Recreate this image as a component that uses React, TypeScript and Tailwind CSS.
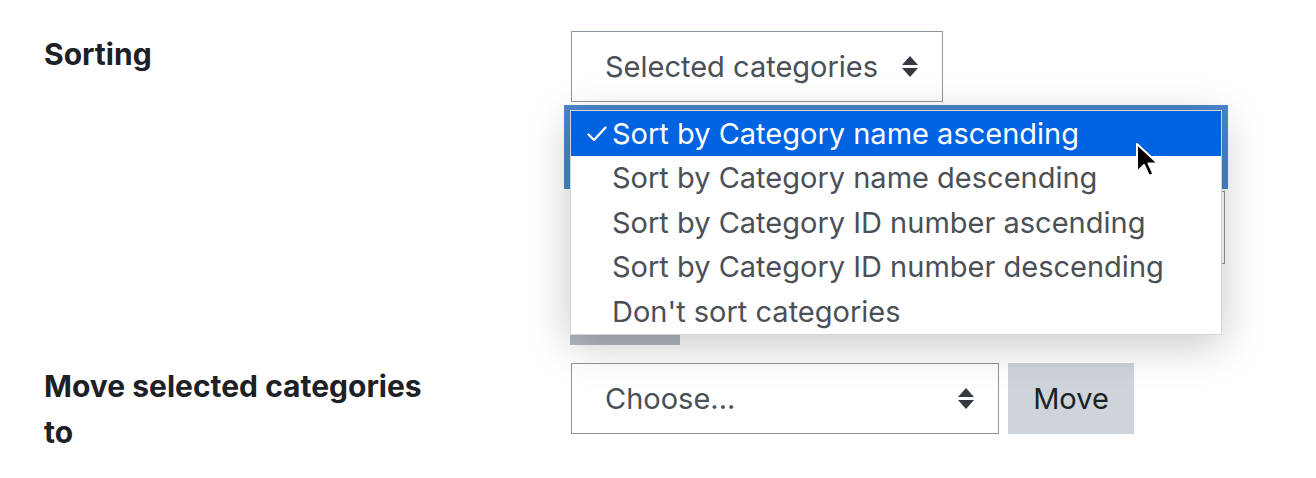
import React from 'react';

const font = { fontFamily: 'Inter, "Noto Sans", "Liberation Sans", sans-serif' };

function SelectArrows() {
  return (
    <svg width="16" height="21" viewBox="0 0 16 21" aria-hidden="true">
      <path d="M8 0 L16 9 L0 9 Z" fill="#343a40" />
      <path d="M0 12 L16 12 L8 21 Z" fill="#343a40" />
    </svg>
  );
}

function Check() {
  return (
    <svg width="20" height="16" viewBox="0 0 20 16" aria-hidden="true">
      <path d="M1.5 8.5 L7 14 L18.5 1.5" fill="none" stroke="white" strokeWidth="2.3" strokeLinecap="round" strokeLinejoin="round" />
    </svg>
  );
}

function Cursor() {
  return (
    <svg width="26" height="38" viewBox="0 0 26 38" aria-hidden="true">
      <path d="M2 1 L2 29 L9 22 L14 33 L18.5 31 L13.5 20.5 L23 20.5 Z" fill="black" stroke="white" strokeWidth="2" strokeLinejoin="round" />
    </svg>
  );
}

const options = [
  'Sort by Category name ascending',
  'Sort by Category name descending',
  'Sort by Category ID number ascending',
  'Sort by Category ID number descending',
  "Don't sort categories",
];

export default function App() {
  return (
    <div className="w-[1316px] h-[478px] bg-white overflow-hidden pl-[44px] pt-[31px]" style={font}>
      {/* Sorting row */}
      <div className="flex items-start">
        <div className="w-[527px] text-[30px] leading-[46px] font-bold text-[#1d2125]">Sorting</div>
        <div className="relative flex flex-col items-start">
          <div className="flex items-center justify-between w-[372px] h-[71px] border border-[#8f959e] pl-[33px] pr-[24px] text-[29px] text-[#495057]">
            <span>Selected categories</span>
            <SelectArrows />
          </div>
          {/* content hidden behind the open menu */}
          <div className="mt-[3px] -ml-[7px] w-[664px] h-[84px] bg-[#4886cb]" />
          <div className="mt-[2px] w-[654px] h-[73px] border border-[#8f959e]" />
          <div className="mt-[8px] -ml-px w-[110px] h-[73px] bg-[#b3b9c0]" />

          {/* open native menu */}
          <div className="absolute left-[-1px] top-[79px] w-[652px] bg-white border border-[#d4d4d4] shadow-[0_10px_40px_rgba(0,0,0,0.22)] text-[29px] text-[#4b5057]">
            {options.map((o, i) => (
              <div
                key={o}
                className={`relative flex items-center h-[44.6px] pl-[41px] ${i === 0 ? 'bg-[#0063e1] text-white' : ''}`}
              >
                {i === 0 && (
                  <span className="absolute left-[16px] top-[15px]">
                    <Check />
                  </span>
                )}
                {o}
              </div>
            ))}
          </div>
          <div className="absolute left-[564px] top-[112px]">
            <Cursor />
          </div>
        </div>
      </div>

      {/* Move row */}
      <div className="flex items-start mt-[18px]">
        <div className="w-[527px] text-[30px] leading-[46px] font-bold text-[#1d2125]">
          Move selected categories
          <br />
          to
        </div>
        <div className="flex items-center gap-[9px]">
          <div className="flex items-center justify-between w-[428px] h-[71px] border border-[#8f959e] pl-[33px] pr-[24px] text-[29px] text-[#495057]">
            <span>Choose...</span>
            <SelectArrows />
          </div>
          <button className="w-[126px] h-[71px] bg-[#ced4da] text-[29px] text-[#1d2125]">Move</button>
        </div>
      </div>
    </div>
  );
}
